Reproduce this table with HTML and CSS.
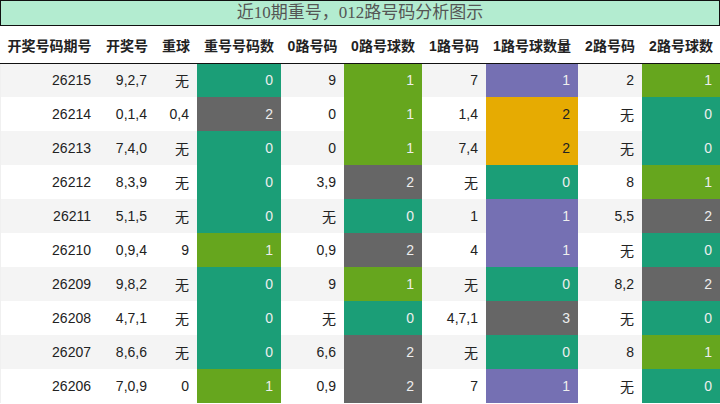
FILE: index.html
```html
<!DOCTYPE html>
<html lang="zh">
<head>
<meta charset="utf-8">
<title>近10期重号，012路号码分析图示</title>
<link rel="stylesheet" href="styles.css">
</head>
<body>
<div class="page">
  <div class="title">近10期重号，012路号码分析图示</div>
  <table class="grid">
    <colgroup>
      <col class="w99"><col class="w56"><col class="w42"><col class="w84"><col class="w63">
      <col class="w78"><col class="w64"><col class="w92"><col class="w64"><col class="w78">
    </colgroup>
    <thead>
      <tr>
        <th>开奖号码期号</th><th>开奖号</th><th>重球</th><th>重号号码数</th><th>0路号码</th>
        <th>0路号球数</th><th>1路号码</th><th>1路号球数量</th><th>2路号码</th><th>2路号球数</th>
      </tr>
    </thead>
    <tbody>
      <tr><td>26215</td><td>9,2,7</td><td>无</td><td class="c-teal">0</td><td>9</td><td class="c-green">1</td><td>7</td><td class="c-purple">1</td><td>2</td><td class="c-green">1</td></tr>
      <tr><td>26214</td><td>0,1,4</td><td>0,4</td><td class="c-grey">2</td><td>0</td><td class="c-green">1</td><td>1,4</td><td class="c-yellow">2</td><td>无</td><td class="c-teal">0</td></tr>
      <tr><td>26213</td><td>7,4,0</td><td>无</td><td class="c-teal">0</td><td>0</td><td class="c-green">1</td><td>7,4</td><td class="c-yellow">2</td><td>无</td><td class="c-teal">0</td></tr>
      <tr><td>26212</td><td>8,3,9</td><td>无</td><td class="c-teal">0</td><td>3,9</td><td class="c-grey">2</td><td>无</td><td class="c-teal">0</td><td>8</td><td class="c-green">1</td></tr>
      <tr><td>26211</td><td>5,1,5</td><td>无</td><td class="c-teal">0</td><td>无</td><td class="c-teal">0</td><td>1</td><td class="c-purple">1</td><td>5,5</td><td class="c-grey">2</td></tr>
      <tr><td>26210</td><td>0,9,4</td><td>9</td><td class="c-green">1</td><td>0,9</td><td class="c-grey">2</td><td>4</td><td class="c-purple">1</td><td>无</td><td class="c-teal">0</td></tr>
      <tr><td>26209</td><td>9,8,2</td><td>无</td><td class="c-teal">0</td><td>9</td><td class="c-green">1</td><td>无</td><td class="c-teal">0</td><td>8,2</td><td class="c-grey">2</td></tr>
      <tr><td>26208</td><td>4,7,1</td><td>无</td><td class="c-teal">0</td><td>无</td><td class="c-teal">0</td><td>4,7,1</td><td class="c-grey">3</td><td>无</td><td class="c-teal">0</td></tr>
      <tr><td>26207</td><td>8,6,6</td><td>无</td><td class="c-teal">0</td><td>6,6</td><td class="c-grey">2</td><td>无</td><td class="c-teal">0</td><td>8</td><td class="c-green">1</td></tr>
      <tr><td>26206</td><td>7,0,9</td><td>0</td><td class="c-green">1</td><td>0,9</td><td class="c-grey">2</td><td>7</td><td class="c-purple">1</td><td>无</td><td class="c-teal">0</td></tr>
    </tbody>
  </table>
</div>
</body>
</html>
```

FILE: styles.css
```css
* { box-sizing: border-box; }
html, body { margin: 0; padding: 0; background: #ffffff; }
body { font-family: "Liberation Sans", "Noto Sans CJK SC", sans-serif; }
.page { width: 720px; height: 404px; overflow: hidden; }
.title {
  height: 26px;
  border: 1px solid #111;
  background: #b3ecd0;
  color: #555;
  font-family: "Liberation Serif", "Noto Sans CJK SC", serif;
  font-size: 17px;
  line-height: 24px;
  text-align: center;
}
.grid {
  width: 720px;
  border-collapse: collapse;
  table-layout: fixed;
  font-size: 14px;
}
.w99 { width: 99px; } .w56 { width: 56px; } .w42 { width: 42px; } .w84 { width: 84px; }
.w63 { width: 63px; } .w78 { width: 78px; } .w64 { width: 64px; } .w92 { width: 92px; }
.grid th {
  height: 37px;
  padding: 1px 0 0;
  font-weight: bold;
  color: #222;
  text-align: center;
  white-space: nowrap;
  border-bottom: 1px solid #111;
  font-family: "Liberation Sans", "Noto Sans CJK SC", sans-serif;
}
.grid td {
  height: 34px;
  padding: 0 8px 0 0;
  text-align: right;
  color: #222;
  white-space: nowrap;
}
.grid tbody tr:nth-child(odd) td { background: #f4f4f4; }
.grid tbody tr:nth-child(even) td { background: #ffffff; }
.grid tbody tr td:first-child { box-shadow: inset 1px 0 0 #f0f0f0; }
.grid tbody tr td.c-teal { background: #1b9e77; color: #eeeeee; }
.grid tbody tr td.c-green { background: #66a61e; color: #eeeeee; }
.grid tbody tr td.c-grey { background: #666666; color: #eeeeee; }
.grid tbody tr td.c-purple { background: #7570b3; color: #eeeeee; }
.grid tbody tr td.c-yellow { background: #e6ab02; color: #222; }
```
